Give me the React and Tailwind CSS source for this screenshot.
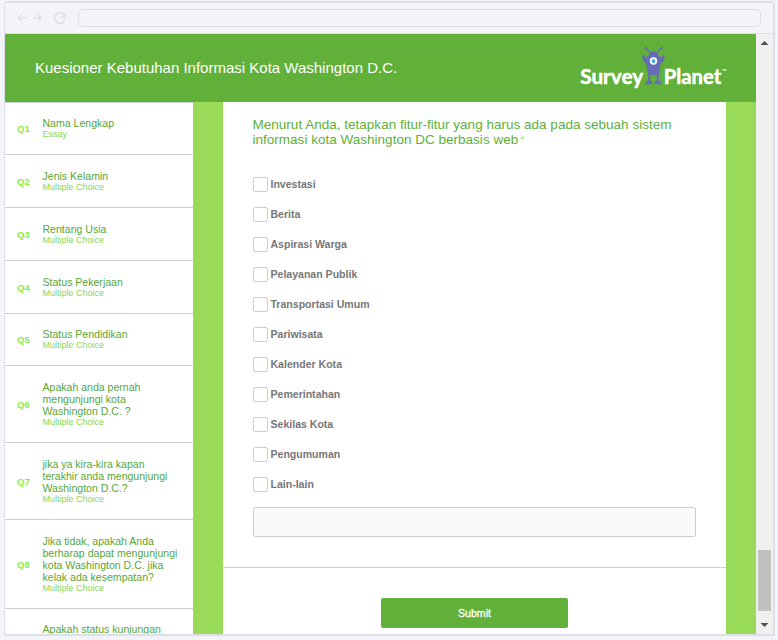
const questions = [
  { id: "Q1", lines: ["Nama Lengkap"], type: "Essay", height: "h-[52px] pb-px" },
  { id: "Q2", lines: ["Jenis Kelamin"], type: "Multiple Choice", height: "h-[53px]" },
  { id: "Q3", lines: ["Rentang Usia"], type: "Multiple Choice", height: "h-[53px]" },
  { id: "Q4", lines: ["Status Pekerjaan"], type: "Multiple Choice", height: "h-[53px]" },
  { id: "Q5", lines: ["Status Pendidikan"], type: "Multiple Choice", height: "h-[52px] pb-px" },
  { id: "Q6", lines: ["Apakah anda pernah", "mengunjungi kota", "Washington D.C. ?"], type: "Multiple Choice", height: "h-[77px]" },
  { id: "Q7", lines: ["jika ya kira-kira kapan", "terakhir anda mengunjungi", "Washington D.C.?"], type: "Multiple Choice", height: "h-[77px]" },
  { id: "Q8", lines: ["Jika tidak, apakah Anda", "berharap dapat mengunjungi", "kota Washington D.C. jika", "kelak ada kesempatan?"], type: "Multiple Choice", height: "h-[89px]" },
];

const options = [
  "Investasi",
  "Berita",
  "Aspirasi Warga",
  "Pelayanan Publik",
  "Transportasi Umum",
  "Pariwisata",
  "Kalender Kota",
  "Pemerintahan",
  "Sekilas Kota",
  "Pengumuman",
  "Lain-lain",
];

function Toolbar() {
  return (
    <div className="flex h-[31px] shrink-0 items-center border-b border-[#dedfe9] bg-[#f3f4f9] pr-[12px] pl-[12px]">
      <svg width="50" height="14" viewBox="0 0 50 14" fill="none" stroke="#dfe0ea" strokeWidth="1.7" className="mr-[11px] shrink-0">
        <path d="M9.5 7H1.5M4.8 3.6L1.4 7l3.4 3.4M16 7h8M20.8 3.6L24.2 7l-3.4 3.4" />
        <path d="M46.6 3.6A5.2 5.2 0 1 0 47.8 8.6" strokeWidth="1.8" />
        <path d="M48.8 1v5.4h-5.4z" fill="#dfe0ea" stroke="none" />
      </svg>
      <div className="h-[18px] flex-1 rounded-[4px] border-[1.5px] border-[#dedfe9]" />
    </div>
  );
}

function Logo() {
  return (
    <svg width="150" height="46" viewBox="0 0 150 46" fontFamily="Lato, sans-serif" fill="#fff">
      <text x="3.200" y="39" fontSize="20.500" fontWeight="700" stroke="#fff" strokeWidth="0.500" textLength="63" lengthAdjust="spacingAndGlyphs">Survey</text>
      <text x="86.800" y="39" fontSize="20.500" fontWeight="700" stroke="#fff" strokeWidth="0.500" textLength="57.500" lengthAdjust="spacingAndGlyphs">Planet</text>
      <text x="144.500" y="28.500" fontSize="7">™</text>
      <g fill="#676cb9">
        <path d="M68.500 3l5 5M84.500 3l-5 5" stroke="#676cb9" strokeWidth="1.200" />
        <circle cx="68.500" cy="3" r="1.200" />
        <circle cx="84.500" cy="3" r="1.200" />
        <path d="M71 11.500c1-3 3-5 5.500-5S81 8.500 82 11.500l3 .8.3-2.300 2.200.6c.6 3-1.200 7-4 8.500l-1 7.500c-.8 2.800-3.500 3.700-6 3.700s-5.200-.9-6-3.700l-1-7.500c-2.800-1.500-4.600-5.500-4-8.500l2.200-.6.3 2.300z" />
        <path d="M71.200 26h2v9.500c2 .5 2.400 2.200 2.400 3.700h-7.200c0-1.700.9-3.200 2.800-3.700zM79.800 26h2v9.500c1.900.5 2.800 2 2.800 3.700h-7.200c0-1.500.4-3.200 2.400-3.700z" />
      </g>
      <circle cx="76.500" cy="16" r="3.700" fill="#fff" />
      <circle cx="76.500" cy="16" r="1.900" fill="#39b3d0" />
    </svg>
  );
}

function Header() {
  return (
    <header className="flex h-[68px] shrink-0 items-center justify-between bg-[#60b039] pr-[29px] pl-[30px] text-white">
      <h1 className="text-[15px] leading-[18px] whitespace-nowrap">Kuesioner Kebutuhan Informasi Kota Washington D.C.</h1>
      <Logo />
    </header>
  );
}

function Sidebar() {
  return (
    <aside className="w-[188px] shrink-0 overflow-hidden border-t border-[#cfcfcf] bg-white">
      {questions.map((q) => (
        <div key={q.id} className={`flex items-center border-b border-[#cfcfcf] pl-[12px] ${q.height}`}>
          <span className="w-[25.500px] shrink-0 pt-[2px] text-[9.600px] leading-[12px] font-bold text-[#8cee48]">{q.id}</span>
          <div className="whitespace-nowrap">
            {q.lines.map((line) => (
              <div key={line} className="text-[10.560px] leading-[12px] text-[#57a639]">{line}</div>
            ))}
            <div className="text-[9px] leading-[10px] text-[#8bd650]">{q.type}</div>
          </div>
        </div>
      ))}
      <div className="pt-[14px] pl-[37.500px] text-[10.560px] leading-[12px] whitespace-nowrap text-[#57a639]">Apakah status kunjungan</div>
    </aside>
  );
}

function Question() {
  return (
    <main className="flex w-[503px] shrink-0 flex-col bg-white">
      <div className="h-[466px] shrink-0 border-b border-[#cfcfcf] px-[30px] pt-[15px]">
        <h2 className="-ml-[0.5px] h-[60px] text-[13.540px] leading-[15px] whitespace-nowrap text-[#60b039]">
          Menurut Anda, tetapkan fitur-fitur yang harus ada pada sebuah sistem
          <br />
          informasi kota Washington DC berbasis web<span className="ml-[2px] text-[10.560px] text-[#8cee48]">*</span>
        </h2>
        {options.map((option) => (
          <label key={option} className="flex h-[30px] items-start text-[10.560px] leading-[14px] font-bold text-[#777]">
            <span className="mr-[2.500px] size-[15px] shrink-0 rounded-[2px] border border-[#cfcfcf] bg-white" />
            {option}
          </label>
        ))}
        <input aria-label="Lain-lain" className="block h-[30px] w-[443px] rounded-[2px] border border-[#cfcfcf] bg-[#fafafa]" />
      </div>
      <button className="mx-auto mt-[30px] h-[30px] w-[187px] rounded-[2px] bg-[#60b039] pt-px text-[10.560px] text-white [-webkit-text-stroke:0.3px_white]">Submit</button>
    </main>
  );
}

function Scrollbar() {
  return (
    <div className="flex w-[17px] shrink-0 flex-col items-center bg-[#f0f0f0]">
      <svg width="17" height="17" viewBox="0 0 17 17" fill="#505050"><path d="M8.500 7l4 4h-8z" /></svg>
      <div className="mt-auto h-[61px] w-[13px] bg-[#c1c1c1]" />
      <svg width="17" height="23" viewBox="0 0 17 23" fill="#505050"><path d="M4.500 12h8l-4 4z" /></svg>
    </div>
  );
}

export default function App() {
  return (
    <div className="h-[640px] w-[778px] bg-[#f3f4f9] pt-[1px] pl-[4px] font-['Liberation_Sans',Arial,sans-serif]">
      <div className="flex h-[635px] w-[771px] flex-col rounded-t-[4px] border-t-2 border-r-2 border-b-2 border-l border-[#dedfe9]">
        <Toolbar />
        <div className="flex min-h-0 flex-1">
          <div className="flex w-[751px] flex-col">
            <Header />
            <div className="flex min-h-0 flex-1 bg-[#99db58]">
              <Sidebar />
              <div className="w-[30px] shrink-0" />
              <Question />
            </div>
          </div>
          <Scrollbar />
        </div>
      </div>
    </div>
  );
}
